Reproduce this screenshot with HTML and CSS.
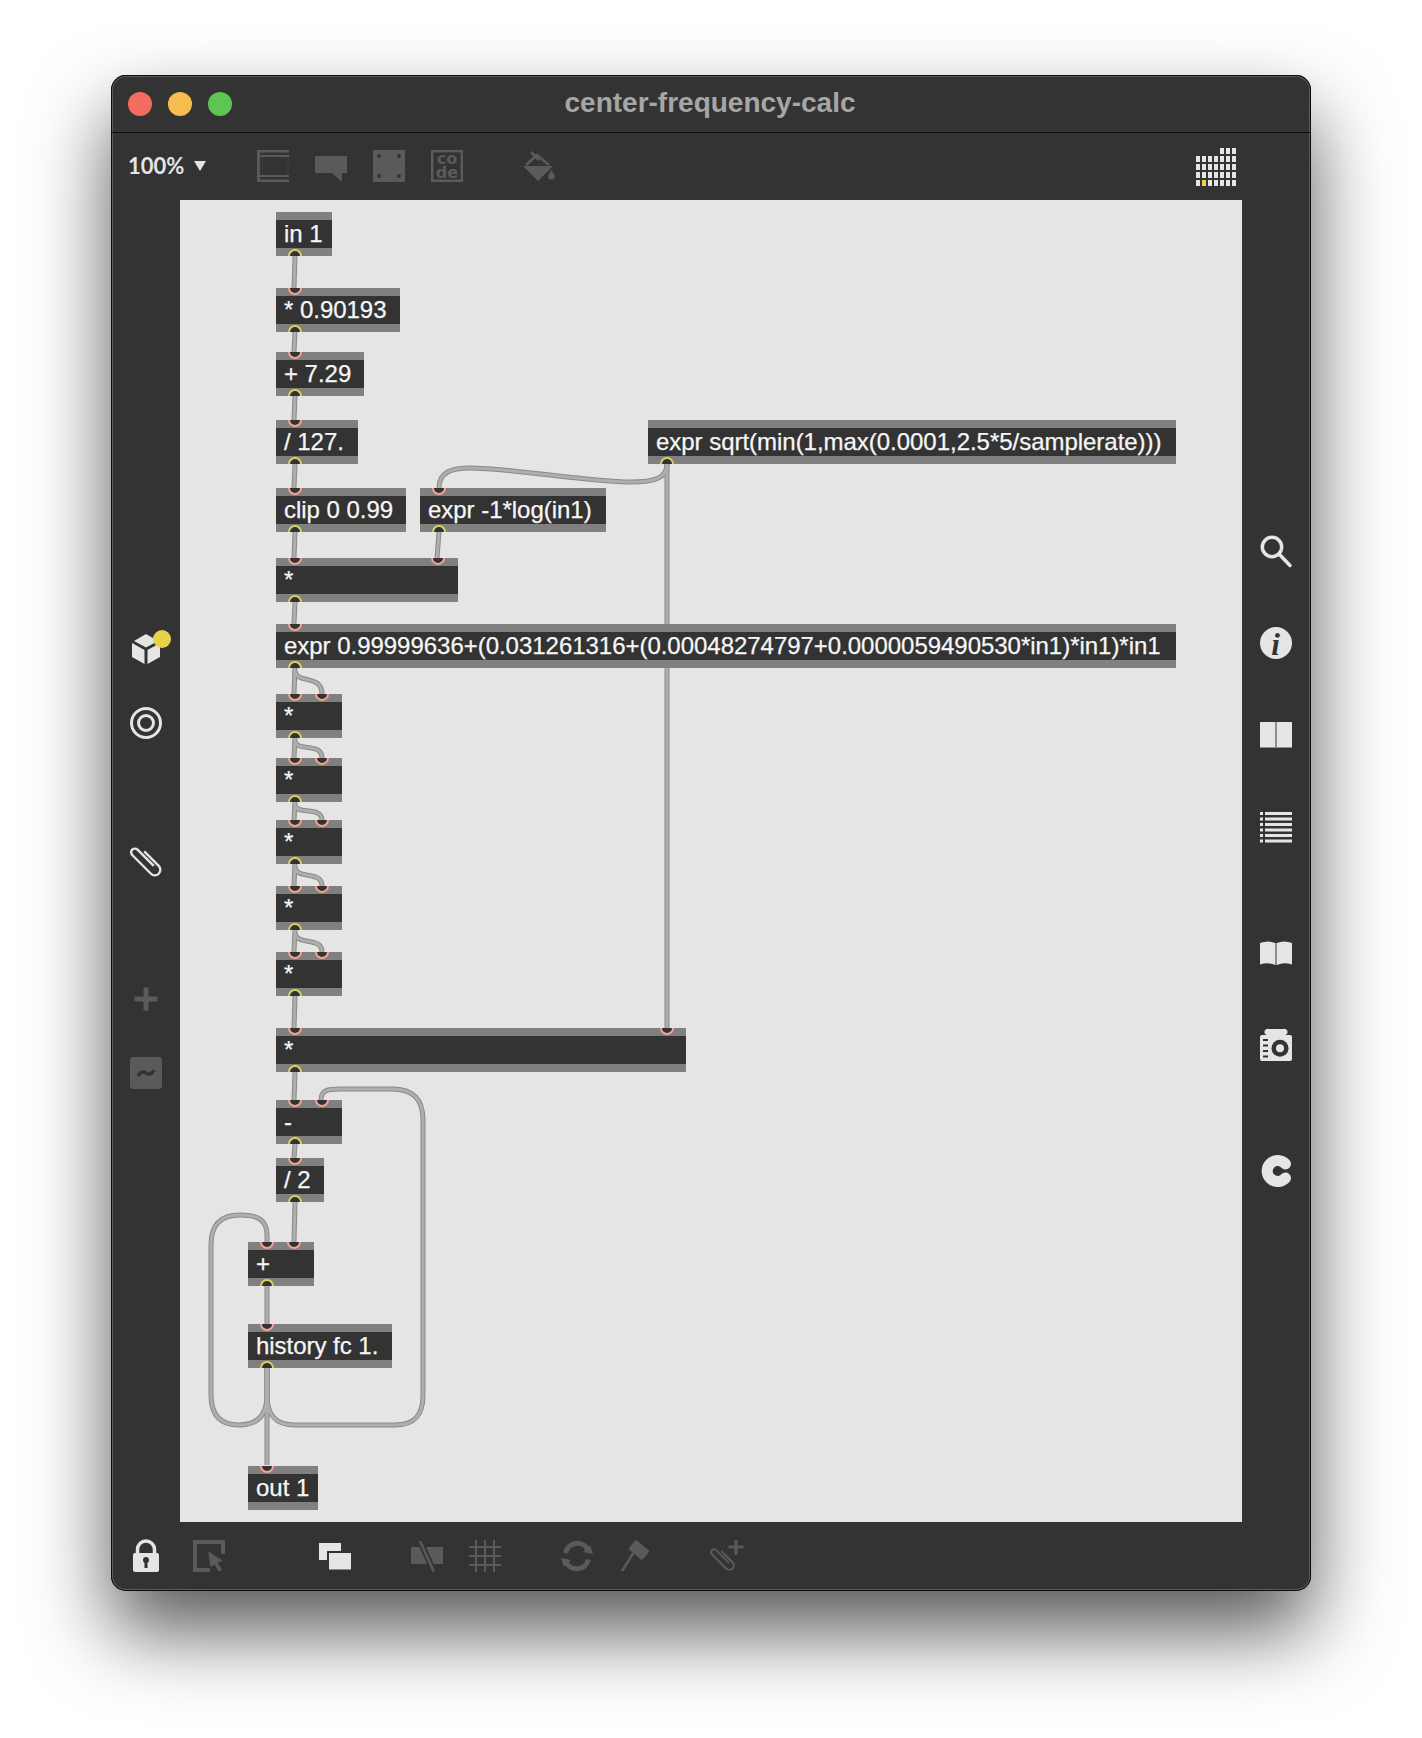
FILE: index.html
```html
<!DOCTYPE html>
<html lang="en">
<head>
<meta charset="utf-8">
<title>center-frequency-calc</title>
<link rel="stylesheet" href="styles.css">
</head>
<body>
<main class="window">
  <header class="titlebar">
    <div class="lights"><span class="light red"></span><span class="light yellow"></span><span class="light green"></span></div>
    <h1 class="title">center-frequency-calc</h1>
  </header>
  <nav class="toolbar">
    <span class="zoom-label">100%</span><span class="zoom-arrow"></span>
    <svg class="ico dim first-tool" viewBox="0 0 32 32"><rect width="3" height="32"/><rect x="3" width="29" height="2.5"/><rect x="3" y="5" width="29" height="2"/><rect x="3" y="25" width="29" height="2"/><rect x="3" y="29.5" width="29" height="2.5"/><rect x="30.5" y="7" width="1" height="18" opacity=".4"/><rect x="5" y="7" width="1" height="18" opacity=".3"/></svg>
    <svg class="ico dim" viewBox="0 0 32 32"><path d="M0 6H32V23H27V32L17 23H0Z"/></svg>
    <svg class="ico dim" viewBox="0 0 32 32"><rect width="32" height="32"/><g class="hole"><circle cx="6" cy="6" r="1.9"/><circle cx="26" cy="6" r="1.9"/><circle cx="6" cy="26" r="1.9"/><circle cx="26" cy="26" r="1.9"/></g></svg>
    <svg class="ico dim" viewBox="0 0 32 32"><rect x="1.2" y="1.2" width="29.6" height="29.6" class="line-dim"/><text x="16" y="14" class="code-text">co</text><text x="16" y="28" class="code-text">de</text></svg>
    <svg class="ico dim bucket" viewBox="0 0 32 32"><path d="M0 16L15 31L30 16Z"/><path d="M3 15L14 5L26 15M8 2L16 10" class="line-dim"/><path d="M28.500 20L32 26A3.500 3.500 0 1 1 25 26Z"/></svg>
    <svg class="pixel-grid" viewBox="0 0 40 38">
      <g class="light-fill">
        <rect x="24" width="4" height="6"/><rect x="30" width="4" height="6"/><rect x="36" width="4" height="6"/>
        <rect y="8" width="4" height="6"/><rect x="6" y="8" width="4" height="6"/><rect x="12" y="8" width="4" height="6"/><rect x="18" y="8" width="4" height="6"/><rect x="24" y="8" width="4" height="6"/><rect x="30" y="8" width="4" height="6"/><rect x="36" y="8" width="4" height="6"/>
        <rect y="16" width="4" height="6"/><rect x="6" y="16" width="4" height="6"/><rect x="12" y="16" width="4" height="6"/><rect x="18" y="16" width="4" height="6"/><rect x="24" y="16" width="4" height="6"/><rect x="30" y="16" width="4" height="6"/><rect x="36" y="16" width="4" height="6"/>
        <rect y="24" width="4" height="6"/><rect x="6" y="24" width="4" height="6"/><rect x="12" y="24" width="4" height="6"/><rect x="18" y="24" width="4" height="6"/><rect x="24" y="24" width="4" height="6"/><rect x="30" y="24" width="4" height="6"/><rect x="36" y="24" width="4" height="6"/>
        <rect y="32" width="4" height="6"/><rect x="12" y="32" width="4" height="6"/><rect x="18" y="32" width="4" height="6"/><rect x="24" y="32" width="4" height="6"/><rect x="30" y="32" width="4" height="6"/><rect x="36" y="32" width="4" height="6"/>
      </g>
      <rect x="6" y="32" width="4" height="6" class="accent"/>
    </svg>
  </nav>
  <div class="middle">
    <aside class="side side-left">
      <svg class="ico bright" viewBox="0 0 32 32"><path d="M16 1L28 8L16 14.500L4 8Z"/><path d="M2 10L14.500 17V31L2 24Z"/><path d="M17.500 17L30 10V24L17.500 31Z"/><circle cx="32" cy="6" r="9" class="accent"/></svg>
      <svg class="ico" viewBox="0 0 32 32"><circle cx="16" cy="16" r="14.500" class="line-bright"/><circle cx="16" cy="16" r="7.500" class="line-bright"/></svg>
      <svg class="ico group-start" viewBox="0 0 32 32"><path d="M5.500 -8V12.500A5.500 5.500 0 0 1 -5.500 12.500V-14A3.750 3.750 0 0 1 2 -14V9" class="line-bright clip-shape" transform="translate(16 16) rotate(-45)"/></svg>
      <svg class="ico dim group-start" viewBox="0 0 32 32"><rect x="13.500" y="4.500" width="5" height="23"/><rect x="4.500" y="13.500" width="23" height="5"/></svg>
      <svg class="ico dim" viewBox="0 0 32 32"><rect width="32" height="32" rx="3"/><path d="M8 19Q11 13 16 16T24 13" class="tilde"/></svg>
    </aside>
    <section class="canvas">
      <svg class="cords" viewBox="180 200 1062 1322">
        <defs>
          <g id="cord-set">
            <path d="M295 256L294 288"/><path d="M295 332L294 352"/><path d="M295 396L294 420"/><path d="M295 464L294 488"/><path d="M295 532L294 558"/><path d="M439 532L437 558"/><path d="M295 602L294 624"/>
            <path d="M439 488C439 472 452 468 470 468C510 468 590 482 630 482C655 482 667 478 667 464"/>
            <path d="M667 464V1028"/>
            <path d="M295 668L294 694"/><path d="M295 671C296 684 322 674 322 694"/>
            <path d="M295 738L294 758"/><path d="M295 741C296 752 322 742 322 758"/>
            <path d="M295 802L294 820"/><path d="M295 805C296 815 322 806 322 820"/>
            <path d="M295 864L294 886"/><path d="M295 867C296 880 322 870 322 886"/>
            <path d="M295 930L294 952"/><path d="M295 933C296 946 322 936 322 952"/>
            <path d="M295 996L294 1028"/><path d="M295 1072L294 1100"/><path d="M295 1144L294 1158"/><path d="M295 1202L294 1242"/>
            <path d="M267 1368V1395C267 1415 275 1425 295 1425H395C415 1425 423 1415 423 1395V1120C423 1098 412 1089 392 1089H340C328 1089 321 1090 321 1100"/>
            <path d="M267 1368V1395C267 1415 258 1425 239 1425C220 1425 211 1415 211 1395V1245C211 1225 220 1215 240 1215C258 1215 267 1220 267 1235V1242"/>
            <path d="M267 1286V1324"/><path d="M267 1368V1465"/>
          </g>
        </defs>
        <use href="#cord-set" class="cord-outer"/>
        <use href="#cord-set" class="cord-inner"/>
      </svg>

      <div class="node n-in"><div class="label">in 1</div><i class="port out"></i></div>
      <div class="node n-mul0"><i class="port in"></i><div class="label">* 0.90193</div><i class="port out"></i></div>
      <div class="node n-add"><i class="port in"></i><div class="label">+ 7.29</div><i class="port out"></i></div>
      <div class="node n-div"><i class="port in"></i><div class="label">/ 127.</div><i class="port out"></i></div>
      <div class="node n-sqrt"><div class="label">expr sqrt(min(1,max(0.0001,2.5*5/samplerate)))</div><i class="port out"></i></div>
      <div class="node n-clip"><i class="port in"></i><div class="label">clip 0 0.99</div><i class="port out"></i></div>
      <div class="node n-log"><i class="port in"></i><div class="label">expr -1*log(in1)</div><i class="port out"></i></div>
      <div class="node n-mula"><i class="port in"></i><i class="port in at-162"></i><div class="label">*</div><i class="port out"></i></div>
      <div class="node n-poly"><i class="port in"></i><div class="label">expr 0.99999636+(0.031261316+(0.00048274797+0.0000059490530*in1)*in1)*in1</div><i class="port out"></i></div>
      <div class="node n-s1"><i class="port in"></i><i class="port in at-46"></i><div class="label">*</div><i class="port out"></i></div>
      <div class="node n-s2"><i class="port in"></i><i class="port in at-46"></i><div class="label">*</div><i class="port out"></i></div>
      <div class="node n-s3"><i class="port in"></i><i class="port in at-46"></i><div class="label">*</div><i class="port out"></i></div>
      <div class="node n-s4"><i class="port in"></i><i class="port in at-46"></i><div class="label">*</div><i class="port out"></i></div>
      <div class="node n-s5"><i class="port in"></i><i class="port in at-46"></i><div class="label">*</div><i class="port out"></i></div>
      <div class="node n-mulb"><i class="port in"></i><i class="port in at-391"></i><div class="label">*</div><i class="port out"></i></div>
      <div class="node n-sub"><i class="port in"></i><i class="port in at-46"></i><div class="label">-</div><i class="port out"></i></div>
      <div class="node n-div2"><i class="port in"></i><div class="label">/ 2</div><i class="port out"></i></div>
      <div class="node n-plus"><i class="port in"></i><i class="port in at-46"></i><div class="label">+</div><i class="port out"></i></div>
      <div class="node n-hist"><i class="port in"></i><div class="label">history fc 1.</div><i class="port out"></i></div>
      <div class="node n-out"><i class="port in"></i><div class="label">out 1</div></div>
    </section>
    <aside class="side side-right">
      <svg class="ico" viewBox="0 0 32 32"><circle cx="12" cy="12" r="9.700" class="line-bright thick"/><path d="M19.500 19.500L30 30.500" class="line-bright thick round"/></svg>
      <svg class="ico bright" viewBox="0 0 32 32"><circle cx="16" cy="16" r="16"/><text x="15.500" y="27.500" class="info-i">i</text></svg>
      <svg class="ico bright" viewBox="0 0 32 32"><rect y="3" width="15" height="26"/><rect x="17" y="3" width="15" height="26"/><rect y="28" width="15" height="1" class="shade"/><rect x="17" y="28" width="15" height="1" class="shade"/><rect x="15" y="3" width="2" height="26" class="shade"/></svg>
      <svg class="ico bright" viewBox="0 0 32 32"><rect y="1" width="3" height="3"/><rect x="5" y="1" width="27" height="3"/><rect y="6.500" width="3" height="3"/><rect x="5" y="6.500" width="27" height="3"/><rect y="12" width="3" height="3"/><rect x="5" y="12" width="27" height="3"/><rect y="17.500" width="3" height="3"/><rect x="5" y="17.500" width="27" height="3"/><rect y="23" width="3" height="3"/><rect x="5" y="23" width="27" height="3"/><rect y="28.500" width="3" height="3"/><rect x="5" y="28.500" width="27" height="3"/></svg>
      <svg class="ico bright group-start-r" viewBox="0 0 32 32"><path d="M0 6Q8 3 15 6V28Q8 25 0 27.500Z"/><path d="M32 6Q24 3 17 6V28Q24 25 32 27.500Z"/><rect x="15" y="6" width="2" height="22" class="shade"/></svg>
      <svg class="ico bright" viewBox="0 0 32 32"><path d="M9 0H23A3 3 0 0 1 25.500 6H30A2 2 0 0 1 32 8V30A2 2 0 0 1 30 32H2A2 2 0 0 1 0 30V8A2 2 0 0 1 2 6H6.500A3 3 0 0 1 9 0Z"/><g class="hole"><circle cx="20" cy="19.300" r="8.500"/><rect x="3" y="10" width="5" height="2"/><rect x="3" y="15.500" width="5" height="2"/><rect x="3" y="21" width="5" height="2"/><rect x="3" y="26.500" width="5" height="2"/></g><circle cx="20" cy="19.300" r="4"/></svg>
      <svg class="ico group-start-r" viewBox="0 0 32 32"><path d="M25.500 9A10.500 10.500 0 1 0 25.500 23" class="line-bright fat"/></svg>
    </aside>
  </div>
  <nav class="bottombar">
    <svg class="ico bright" viewBox="0 0 32 32"><path d="M7.500 14V9.500A8.500 8.500 0 0 1 24.500 9.500V14" class="line-bright thick"/><rect x="3" y="13" width="26" height="19" rx="2"/><g class="hole"><circle cx="16" cy="20" r="3"/><rect x="14.500" y="20" width="3" height="8"/></g></svg>
    <svg class="ico dim b-cursor" viewBox="0 0 32 32"><path d="M17 30H2V2H30V14" class="line-dim wide"/><path d="M15 11L30 21L24.500 22.500L29 30L26 32L21.500 24.500L17.500 27Z"/></svg>
    <svg class="ico bright b-stack" viewBox="0 0 32 32"><rect y="3" width="22" height="17"/><rect x="9" y="12" width="24" height="18.500" class="front"/></svg>
    <svg class="ico dim b-mute" viewBox="0 0 32 32"><rect y="7" width="32" height="17"/><path d="M9 1L23 32" class="slash-gap"/><path d="M9 1L23 32" class="line-dim"/></svg>
    <svg class="ico dim b-grid" viewBox="0 0 32 32"><rect x="6" width="2" height="32"/><rect x="15" width="2" height="32"/><rect x="24" width="2" height="32"/><rect y="6" width="32" height="2"/><rect y="15" width="32" height="2"/><rect y="24" width="32" height="2"/></svg>
    <svg class="ico dim b-refresh" viewBox="0 0 32 32"><path d="M4.500 13A12 12 0 0 1 27 10" class="line-dim wide5"/><path d="M27.500 19.500A12 12 0 0 1 5 22" class="line-dim wide5"/><path d="M22 12L32 14L29 5Z"/><path d="M10 20L0 18L3 27Z"/></svg>
    <svg class="ico dim b-hammer" viewBox="0 0 32 32"><rect x="-9" y="-6" width="18" height="12" rx="1.500" transform="translate(20 10) rotate(40)"/><path d="M3 31L15 12" class="line-dim"/></svg>
    <svg class="ico dim b-clip" viewBox="0 0 32 32"><path d="M4.500 -7V9A4.500 4.500 0 0 1 -4.500 9V-11A3 3 0 0 1 1.500 -11V7" class="line-dim thin" transform="translate(12 19) rotate(-45)"/><rect x="17.500" y="5.500" width="15" height="3"/><rect x="23.500" y="0" width="3" height="15"/></svg>
  </nav>
</main>
</body>
</html>
```

FILE: styles.css
```css
* { box-sizing: border-box; }
html, body { margin: 0; padding: 0; background: #fff; }
body { width: 1422px; height: 1738px; padding: 75px 0 0 111px; overflow: hidden; font-family: "Liberation Sans", Arial, sans-serif; }

.window {
  width: 1200px;
  height: 1516px;
  background: #333;
  border-radius: 15px;
  box-shadow: inset 0 0 0 1px #0c0c0c, inset 0 0 0 2px #5a5a5a, 0 40px 80px rgba(0, 0, 0, .66);
  display: flex;
  flex-direction: column;
}

.titlebar {
  height: 58px;
  border-bottom: 1px solid #0f0f0f;
  display: grid;
  grid-template-columns: 1fr auto 1fr;
  align-items: center;
  margin: 0 1px;
  flex: none;
}
.lights { display: flex; gap: 16px; padding-left: 16px; }
.light { width: 24px; height: 24px; border-radius: 50%; }
.red { background: #f26c5f; }
.yellow { background: #f5bd4f; }
.green { background: #61c554; }
.title { grid-column: 2; margin: -2px 2px 0 0; font-size: 28px; font-weight: 700; color: #a6a6a6; line-height: 1; }

.toolbar { height: 67px; flex: none; display: flex; align-items: flex-start; padding: 17px 75px 0 17px; }
.zoom-label { font: 700 22px/32px Lato, sans-serif; color: #e5e5e5; width: 60px; }
.zoom-arrow { width: 0; height: 0; margin: 11px 0 0 6px; border: solid transparent; border-width: 10px 6px 0; border-top-color: #e5e5e5; }
.first-tool { margin-left: 51px; }
.toolbar .ico + .ico { margin-left: 26px; }
.toolbar .ico + .bucket { margin-left: 60px; }
.pixel-grid { width: 40px; height: 38px; margin: -2px 0 0 auto; overflow: visible; }

.ico { width: 32px; height: 32px; flex: none; overflow: visible; fill: #e5e5e5; display: block; }
.ico.dim { fill: #5a5a5a; }
.ico.bright { fill: #e5e5e5; }
.hole { fill: #333; }
.light-fill { fill: #e5e5e5; }
.accent { fill: #e8d24a; }
.shade { fill: #8e8e8e; }
.line-dim { fill: none; stroke: #5a5a5a; stroke-width: 2.500; }
.line-bright { fill: none; stroke: #e5e5e5; stroke-width: 3; }
.line-bright.thick { stroke-width: 3.500; }
.line-bright.round { stroke-linecap: round; }
.line-bright.fat { stroke-width: 11; stroke-linecap: round; }
.line-dim.wide { stroke-width: 4; }
.line-dim.wide5 { stroke-width: 5; }
.line-dim.thin { stroke-width: 2; }
.line-bright.clip-shape { stroke-width: 2.400; }
.code-text { font: 700 16px "DejaVu Sans", sans-serif; text-anchor: middle; fill: #5a5a5a; }
.info-i { font: italic 700 31px "Liberation Serif", serif; text-anchor: middle; fill: #333; }
.tilde { fill: none; stroke: #333; stroke-width: 3.500; }
.front { stroke: #333; stroke-width: 2; }
.slash-gap { fill: none; stroke: #333; stroke-width: 6; }

.middle { flex: 1; display: flex; min-height: 0; }
.side { width: 69px; flex: none; display: flex; flex-direction: column; align-items: center; }
.side-left { padding-top: 433px; gap: 42px; }
.group-start { margin-top: 64px; }
.side-right { padding: 335px 1px 0 0; gap: 60px; }
.group-start-r { margin-top: 34px; }

.canvas { position: relative; flex: 1; background: #e5e5e5; }
.cords { position: absolute; inset: 0; width: 100%; height: 100%; fill: none; }
.cord-outer { stroke: #8a8a8a; stroke-width: 5; }
.cord-inner { stroke: #aeaeae; stroke-width: 3; }

.node { position: absolute; height: 44px; padding: 8px 0; background: #808080; overflow: hidden; }
.label { height: 28px; background: #333; color: #f6f6f6; padding-left: 8px; font-size: 24px; line-height: 27px; letter-spacing: -.03px; white-space: nowrap; -webkit-text-stroke: .25px #f6f6f6; }
.port { position: absolute; left: 12px; width: 14px; height: 14px; border-radius: 50%; background: #333; border: 2px solid; }
.port.in { top: -7px; border-color: #f0a592; z-index: 1; }
.port.out { bottom: -7px; border-color: #d9d25f; }
.port.at-46 { left: 39px; }
.port.at-162 { left: 155px; }
.port.at-391 { left: 384px; }

.n-in { left: 96px; top: 12px; width: 56px; }
.n-mul0 { left: 96px; top: 88px; width: 124px; }
.n-add { left: 96px; top: 152px; width: 88px; }
.n-div { left: 96px; top: 220px; width: 82px; }
.n-sqrt { left: 468px; top: 220px; width: 528px; }
.n-clip { left: 96px; top: 288px; width: 130px; }
.n-log { left: 240px; top: 288px; width: 186px; }
.n-mula { left: 96px; top: 358px; width: 182px; }
.n-poly { left: 96px; top: 424px; width: 900px; }
.n-s1 { left: 96px; top: 494px; width: 66px; }
.n-s2 { left: 96px; top: 558px; width: 66px; }
.n-s3 { left: 96px; top: 620px; width: 66px; }
.n-s4 { left: 96px; top: 686px; width: 66px; }
.n-s5 { left: 96px; top: 752px; width: 66px; }
.n-mulb { left: 96px; top: 828px; width: 410px; }
.n-sub { left: 96px; top: 900px; width: 66px; }
.n-div2 { left: 96px; top: 958px; width: 48px; }
.n-plus { left: 68px; top: 1042px; width: 66px; }
.n-hist { left: 68px; top: 1124px; width: 144px; }
.n-out { left: 68px; top: 1266px; width: 70px; }

.bottombar { height: 69px; flex: none; display: flex; align-items: flex-start; padding: 18px 0 0 19px; }
.b-cursor { margin-left: 31px; }
.b-stack { margin-left: 94px; }
.b-mute { margin-left: 60px; }
.b-grid { margin-left: 26px; }
.b-refresh { margin-left: 60px; }
.b-hammer { margin-left: 26px; }
.b-clip { margin-left: 60px; }
```
